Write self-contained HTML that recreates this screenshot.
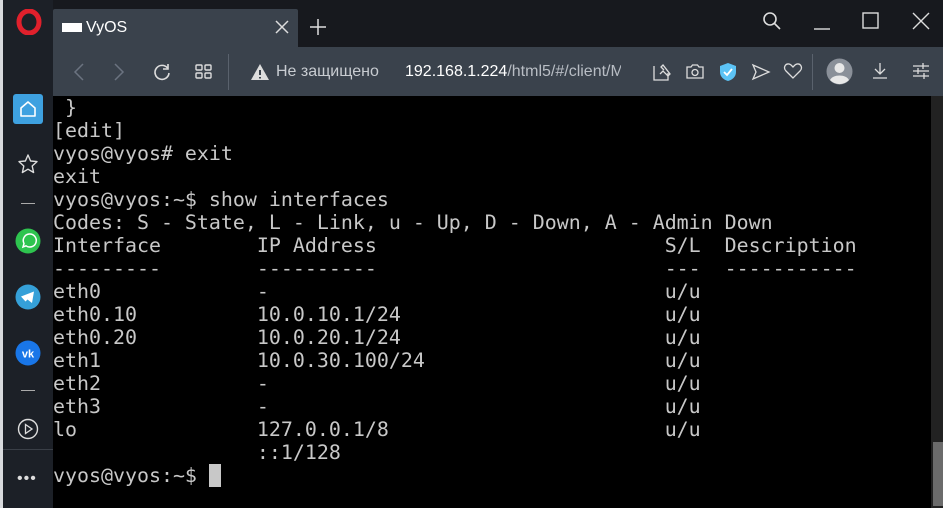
<!DOCTYPE html>
<html><head><meta charset="utf-8"><style>
*{margin:0;padding:0;box-sizing:border-box}
body{width:943px;height:508px;overflow:hidden;background:#000;position:relative;font-family:"Liberation Sans","DejaVu Sans",sans-serif}
.top{position:absolute;left:0;top:0;width:943px;height:47px;background:#17191e}
.tab{position:absolute;left:53px;top:9px;width:245px;height:39px;background:#3a424c;border-radius:2px 2px 0 0}
.bar{position:absolute;left:53px;top:47px;width:890px;height:49px;background:#3a424c}
.side{position:absolute;left:0;top:0;width:53px;height:508px;background:#1c2027}
.strip{position:absolute;left:0;top:0;width:3px;height:508px;background:#d8dadd}
.term{position:absolute;left:53px;top:96px;width:878px;height:412px;background:#000;color:#c8c8c8;font-family:"DejaVu Sans Mono",monospace;font-size:19.93px;line-height:23px;white-space:pre}
.sb{position:absolute;left:931px;top:96px;width:12px;height:412px;background:#222}
.thumb{position:absolute;left:933px;top:442px;width:10px;height:64px;background:#6b6b6b}
.t{position:absolute;color:#fff;font-size:15px;white-space:nowrap}
svg{position:absolute}
</style></head><body>
<div class="top"></div>
<div class="side"></div>
<div class="strip"></div>
<div class="tab"></div>
<div class="bar"></div>
<svg style="left:16px;top:9px" width="26" height="26" viewBox="0 0 26 26"><ellipse cx="13" cy="13" rx="10" ry="11" fill="none" stroke="#e0202c" stroke-width="5"/></svg>
<div style="position:absolute;left:62px;top:23px;width:20px;height:9px;background:#fff"></div>
<div class="t" style="left:86px;top:19px;font-size:16px">VyOS</div>
<svg style="left:275px;top:20px" width="14" height="14"><path d="M1 1L13 13M13 1L1 13" stroke="#ddd" stroke-width="1.5"/></svg>
<svg style="left:310px;top:19px" width="16" height="16"><path d="M8 0V16M0 8H16" stroke="#ddd" stroke-width="1.5"/></svg>
<svg style="left:762px;top:11px" width="20" height="20"><circle cx="8" cy="8" r="6" fill="none" stroke="#ddd" stroke-width="1.6"/><path d="M12.5 12.5L18 18" stroke="#ddd" stroke-width="1.6"/></svg>
<svg style="left:813px;top:20px" width="18" height="10"><path d="M1 9H17" stroke="#ddd" stroke-width="1.4"/></svg>
<svg style="left:862px;top:12px" width="18" height="18"><rect x="1" y="1" width="15" height="15" fill="none" stroke="#ddd" stroke-width="1.4"/></svg>
<svg style="left:912px;top:12px" width="18" height="18"><path d="M1 1L17 17M17 1L1 17" stroke="#ddd" stroke-width="1.4"/></svg>
<svg style="left:72px;top:63px" width="14" height="18"><path d="M11 1L3 9L11 17" fill="none" stroke="#6b7380" stroke-width="1.5"/></svg>
<svg style="left:112px;top:63px" width="14" height="18"><path d="M3 1L11 9L3 17" fill="none" stroke="#6b7380" stroke-width="1.5"/></svg>
<svg style="left:152px;top:62px" width="20" height="20"><path d="M15.5 6A7 7 0 1 0 17 11" fill="none" stroke="#ddd" stroke-width="1.6"/><path d="M16 2V7H11" fill="none" stroke="#ddd" stroke-width="1.6"/></svg>
<svg style="left:195px;top:64px" width="18" height="16"><g fill="none" stroke="#ddd" stroke-width="1.4"><rect x="1" y="1" width="6" height="5" rx="1"/><rect x="10" y="1" width="6" height="5" rx="1"/><rect x="1" y="9" width="6" height="5" rx="1"/><rect x="10" y="9" width="6" height="5" rx="1"/></g></svg>
<div style="position:absolute;left:228px;top:54px;width:1px;height:36px;background:#5a626d"></div>
<svg style="left:250px;top:63px" width="20" height="18"><path d="M10 1L19 17H1Z" fill="#ddd"/><path d="M10 7V12M10 14V15.5" stroke="#3a424c" stroke-width="2"/></svg>
<div class="t" style="left:276px;top:63px;color:#c8ccd1;font-size:16px">Не защищено</div>
<div style="position:absolute;left:405px;top:63px;width:216px;overflow:hidden" class="t"><span style="font-size:16px">192.168.1.224<span style="color:#b8bdc4">/html5/#/client/M</span></span></div>
<svg style="left:652px;top:62px" width="20" height="20"><path d="M2 4V18H16V11" fill="none" stroke="#ddd" stroke-width="1.3"/><path d="M8 12L11 9L16 14L18 12L11 3L9 5L12 8" fill="none" stroke="#ddd" stroke-width="1.3"/></svg>
<svg style="left:686px;top:63px" width="18" height="16"><path d="M1 4H5L6.5 2H11.5L13 4H17V15H1Z" fill="none" stroke="#ddd" stroke-width="1.3"/><circle cx="9" cy="9.5" r="3" fill="none" stroke="#ddd" stroke-width="1.3"/></svg>
<svg style="left:719px;top:62px" width="18" height="20"><path d="M9 1L17 4V10C17 15 13 18 9 19C5 18 1 15 1 10V4Z" fill="#5cc3f5"/><path d="M5 10L8 13L13 7" fill="none" stroke="#fff" stroke-width="1.8"/></svg>
<svg style="left:751px;top:63px" width="20" height="18"><path d="M2 2L18 9L2 16L5 9Z" fill="none" stroke="#ddd" stroke-width="1.3"/></svg>
<svg style="left:783px;top:62px" width="20" height="18"><path d="M10 16L3 9C0 6 2 1.5 6 2C8 2.3 9 4 10 5C11 4 12 2.3 14 2C18 1.5 20 6 17 9Z" fill="none" stroke="#ddd" stroke-width="1.3"/></svg>
<div style="position:absolute;left:812px;top:54px;width:1px;height:36px;background:#5a626d"></div>
<svg style="left:826px;top:58px" width="27" height="27"><circle cx="13.5" cy="13.5" r="13" fill="#8a9099"/><circle cx="13.5" cy="10" r="5" fill="#e8e8e8"/><path d="M4 22C7 16 20 16 23 22A13 13 0 0 1 4 22Z" fill="#e8e8e8"/></svg>
<svg style="left:872px;top:62px" width="16" height="18"><path d="M8 1V12M3 7L8 12L13 7M1 16H15" fill="none" stroke="#ddd" stroke-width="1.3"/></svg>
<svg style="left:912px;top:63px" width="18" height="16"><path d="M1 3H17M1 8H17M1 13H17M11 0V6M6 5V11M12 10V16" stroke="#ddd" stroke-width="1.3"/></svg>
<div style="position:absolute;left:13px;top:94px;width:30px;height:30px;background:#3ea1e0;border-radius:3px"></div>
<svg style="left:17px;top:98px" width="22" height="22"><path d="M4 10L11 4L18 10V18H4Z" fill="none" stroke="#fff" stroke-width="1.6" stroke-linejoin="round"/></svg>
<svg style="left:17px;top:153px" width="22" height="22"><path d="M11 2L13.6 8L20 8.6L15.2 13L16.6 19.5L11 16.2L5.4 19.5L6.8 13L2 8.6L8.4 8Z" fill="none" stroke="#ddd" stroke-width="1.4" stroke-linejoin="round"/></svg>
<div style="position:absolute;left:21px;top:203px;width:14px;height:1px;background:#aaa"></div>
<svg style="left:15px;top:228px" width="26" height="26"><circle cx="13" cy="13" r="12.5" fill="#2ec44f"/><path d="M8 19L9 15.5A6.5 6.5 0 1 1 11 17.8Z" fill="none" stroke="#fff" stroke-width="1.5"/></svg>
<svg style="left:15px;top:284px" width="26" height="26"><circle cx="13" cy="13" r="12.5" fill="#35a0d8"/><path d="M6 12.5L19 7.5L17 19L12.5 15.5L10.5 17.5Z" fill="#fff"/></svg>
<svg style="left:15px;top:340px" width="26" height="26"><circle cx="13" cy="13" r="12.5" fill="#1976e8"/><text x="13" y="17.5" font-size="11" font-weight="bold" fill="#fff" text-anchor="middle" font-family="Liberation Sans">vk</text></svg>
<div style="position:absolute;left:21px;top:390px;width:14px;height:1px;background:#aaa"></div>
<svg style="left:17px;top:418px" width="22" height="22"><circle cx="11" cy="11" r="9.5" fill="none" stroke="#ddd" stroke-width="1.4"/><path d="M8.5 6.5L15 11L8.5 15.5Z" fill="none" stroke="#ddd" stroke-width="1.3"/></svg>
<div style="position:absolute;left:3px;top:449px;width:50px;height:1px;background:#3a3f47"></div>
<div style="position:absolute;left:17px;top:470px;color:#ddd;font-size:16px;letter-spacing:1px">•••</div>
<div class="term"> }
[edit]
vyos@vyos# exit
exit
vyos@vyos:~$ show interfaces
Codes: S - State, L - Link, u - Up, D - Down, A - Admin Down
Interface        IP Address                        S/L  Description
---------        ----------                        ---  -----------
eth0             -                                 u/u
eth0.10          10.0.10.1/24                      u/u
eth0.20          10.0.20.1/24                      u/u
eth1             10.0.30.100/24                    u/u
eth2             -                                 u/u
eth3             -                                 u/u
lo               127.0.0.1/8                       u/u
                 ::1/128
vyos@vyos:~$ <span style="background:#c8c8c8"> </span></div>
<div class="sb"></div>
<div class="thumb"></div>
</body></html>
